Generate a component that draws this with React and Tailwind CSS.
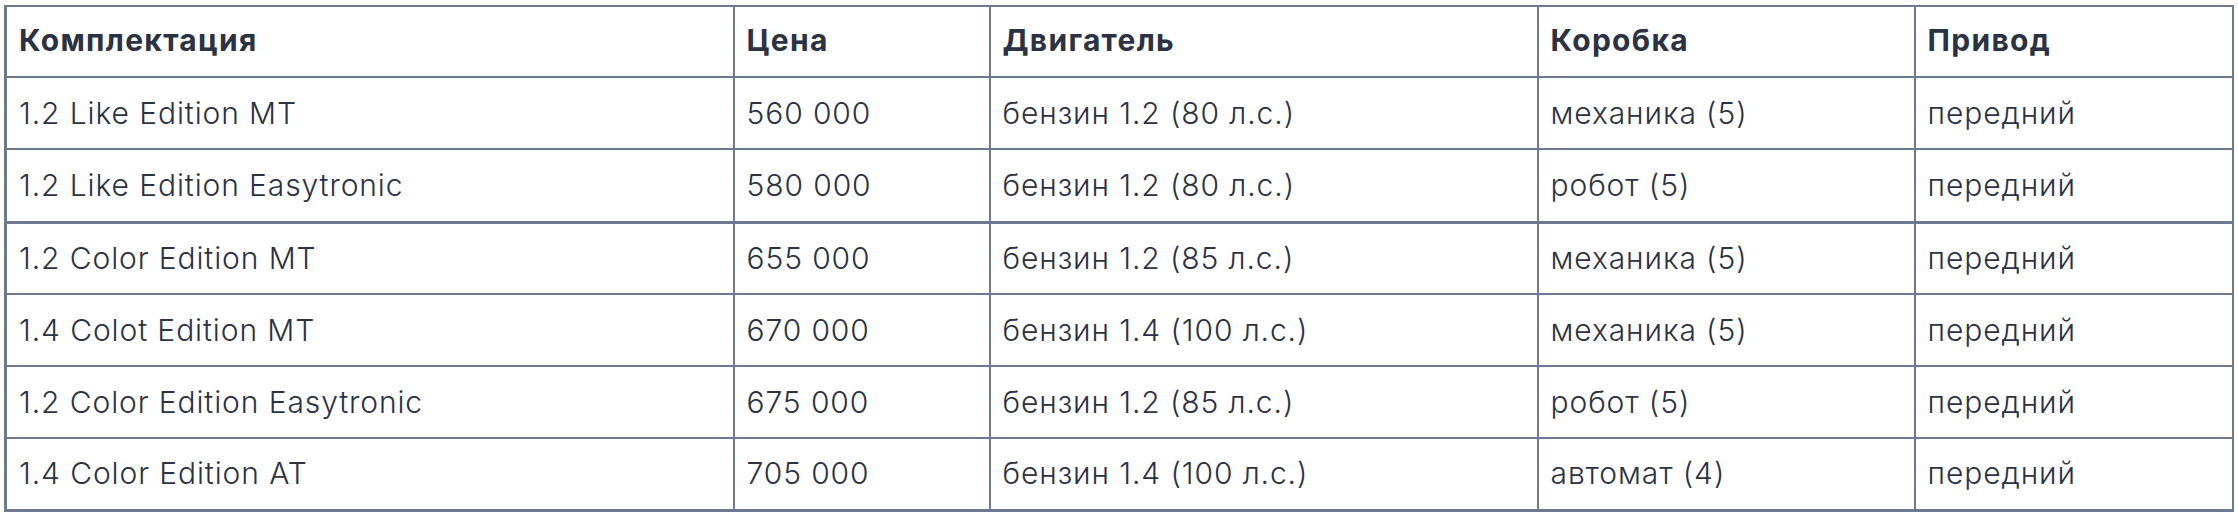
import React from "react";

const rows = [
  ["1.2 Like Edition MT", "560 000", "бензин 1.2 (80 л.с.)", "механика (5)", "передний"],
  ["1.2 Like Edition Easytronic", "580 000", "бензин 1.2 (80 л.с.)", "робот (5)", "передний"],
  ["1.2 Color Edition MT", "655 000", "бензин 1.2 (85 л.с.)", "механика (5)", "передний"],
  ["1.4 Colot Edition MT", "670 000", "бензин 1.4 (100 л.с.)", "механика (5)", "передний"],
  ["1.2 Color Edition Easytronic", "675 000", "бензин 1.2 (85 л.с.)", "робот (5)", "передний"],
  ["1.4 Color Edition AT", "705 000", "бензин 1.4 (100 л.с.)", "автомат (4)", "передний"],
];

const heads = ["Комплектация", "Цена", "Двигатель", "Коробка", "Привод"];

const App = () => {
  return (
    <div className="bg-white pt-[5px] pl-[4px] font-['Inter','Noto_Sans',sans-serif] text-[#2b3243]">
      <table className="w-[2227px] table-fixed border-collapse border-l-[3px] border-b-[3px] border-t-2 border-r-2 border-[#6e7891]">
        <colgroup>
          <col className="w-[728px]" />
          <col className="w-[256px]" />
          <col className="w-[548px]" />
          <col className="w-[377px]" />
          <col className="w-[318px]" />
        </colgroup>
        <thead>
          <tr className="h-[71px]">
            {heads.map((h) => (
              <th
                key={h}
                className="border-2 border-[#6e7891] px-[12px] pb-[2px] text-left align-middle text-[30px] font-bold tracking-[1.3px]"
              >
                {h}
              </th>
            ))}
          </tr>
        </thead>
        <tbody>
          {rows.map((r, i) => (
            <tr
              key={i}
              className={i === 1 ? "h-[73px] border-b-[3px] border-[#6e7891]" : "h-[72px]"}
            >
              {r.map((c, j) => (
                <td
                  key={j}
                  className="border-2 border-[#6e7891] px-[12px] align-middle text-[30px] font-light tracking-[0.9px]"
                >
                  {c}
                </td>
              ))}
            </tr>
          ))}
        </tbody>
      </table>
    </div>
  );
};

export default App;
